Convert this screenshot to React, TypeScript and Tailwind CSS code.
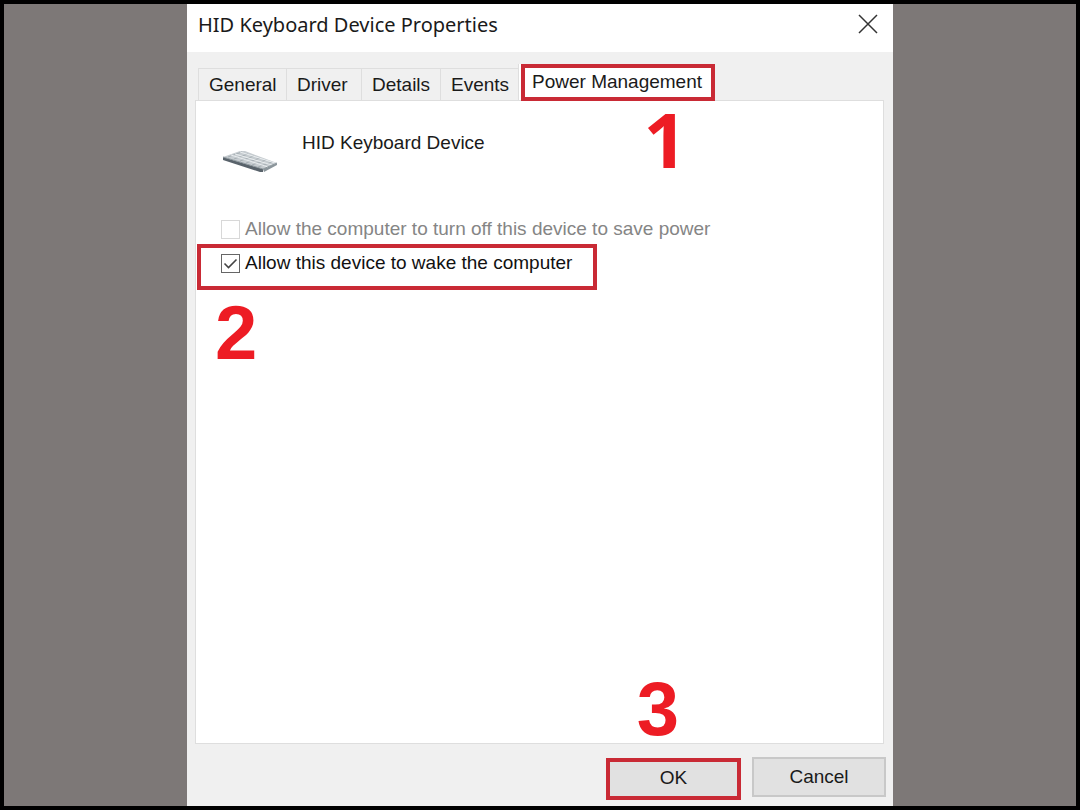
import { useState } from "react";
import clsx from "clsx";

const tabs = [
  { name: "General", width: "w-[88px]" },
  { name: "Driver", width: "w-[75px]" },
  { name: "Details", width: "w-[79px]" },
  { name: "Events", width: "w-[78px]" },
];

const KeyboardIcon = () => (
  <svg width="58" height="26" viewBox="0 0 58 26" aria-hidden="true">
    <path d="M1 8 L41 20 L41 23 L38 23 L1 11 Z" fill="#59636b" />
    <path d="M41 20 L55 14 L55 16 L42 23 Z" fill="#8b959b" />
    <path d="M1 8 L18 2 L23 2 L55 14 L41 20 Z" fill="#c6ccd0" />
    <path
      d="M6 8 L20 3 M12 10 L26 5 M18 12 L32 7 M24 14 L38 9 M30 16 L44 11 M36 18 L50 13"
      stroke="#a6afb4"
      strokeWidth="1"
    />
    <path
      d="M9 6 L46 18 M13 5 L50 16 M18 3 L53 14"
      stroke="#e9edef"
      strokeWidth="1"
    />
    <path d="M1 8 L41 20 L55 14" stroke="#8d979d" strokeWidth="1" fill="none" />
  </svg>
);

interface StepNumberProps {
  value: number;
  className: string;
}

const StepNumber = ({ value, className }: StepNumberProps) => (
  <span
    className={clsx(
      "pointer-events-none absolute text-[76px] leading-none font-bold text-[#ed1c24]",
      className,
    )}
  >
    {value}
  </span>
);

interface CheckOptionProps {
  id: string;
  label: string;
  checked: boolean;
  disabled?: boolean;
  onChange?: (checked: boolean) => void;
}

const CheckOption = ({ id, label, checked, disabled, onChange }: CheckOptionProps) => (
  <div className="flex h-6 items-center gap-[5px]">
    <span className="relative flex size-[19px] shrink-0">
      <input
        id={id}
        type="checkbox"
        checked={checked}
        disabled={disabled}
        onChange={(e) => onChange?.(e.target.checked)}
        className="size-full appearance-none border border-[#666] bg-white disabled:border-[#d8d8d8]"
      />
      {checked && (
        <svg
          viewBox="0 0 19 19"
          className="pointer-events-none absolute inset-0"
          fill="none"
          stroke="#444"
          strokeWidth="1.6"
        >
          <path d="M3.5 9.5 L7.5 13.5 L15.5 5.5" />
        </svg>
      )}
    </span>
    <label
      htmlFor={id}
      className={clsx("text-[19px] leading-6", disabled ? "text-[#858585]" : "text-[#111]")}
    >
      {label}
    </label>
  </div>
);

export default function App() {
  const [wake, setWake] = useState(true);

  return (
    <div className="flex min-h-screen justify-center border-4 border-black bg-[#7d7877] font-['Liberation_Sans',Arial,sans-serif] text-[#1a1a1a]">
      <div role="dialog" aria-labelledby="title" className="flex w-full max-w-[706px] flex-col bg-[#f0f0f0]">
        <header className="flex h-12 items-center justify-between bg-white pr-[15px] pl-[11px]">
          <h1 id="title" className="pb-[6px] font-['Noto_Sans','Open_Sans',sans-serif] text-[20px] leading-7">
            HID Keyboard Device Properties
          </h1>
          <button type="button" aria-label="Close" className="mb-2">
            <svg width="20" height="20" viewBox="0 0 20 20" stroke="#333" strokeWidth="1.5">
              <path d="M1 1 L19 19 M19 1 L1 19" />
            </svg>
          </button>
        </header>

        <div role="tablist" className="flex items-end pt-3 pl-[11px]">
          {tabs.map((tab) => (
            <button
              key={tab.name}
              type="button"
              role="tab"
              aria-selected={false}
              className={clsx(
                "h-8 border-t border-l border-[#dedede] pl-[10px] text-left text-[19px] leading-6",
                tab.width,
              )}
            >
              {tab.name}
            </button>
          ))}
          <div className="flex h-9 border-l border-[#dedede] bg-white pl-[2px]">
            <button
              type="button"
              role="tab"
              aria-selected={true}
              className="z-10 h-[37px] border-4 border-[#c92a35] bg-white pr-[9px] pb-[2px] pl-[7px] text-[19px] leading-6"
            >
              Power Management
            </button>
          </div>
        </div>

        <main role="tabpanel" className="relative mr-[9px] ml-2 flex-1 border border-[#dedede] bg-white">
          <div className="flex h-[116px] items-start gap-[22px] pt-[30px] pl-[26px]">
            <div className="pt-[18px]">
              <KeyboardIcon />
            </div>
            <h2 className="text-[19px] leading-6">HID Keyboard Device</h2>
          </div>
          <div className="pl-[25px]">
            <CheckOption
              id="turn-off"
              label="Allow the computer to turn off this device to save power"
              checked={false}
              disabled
            />
          </div>
          <div className="mt-[3px] ml-px w-fit border-4 border-[#c92a35] pt-[3px] pr-[21px] pb-[11px] pl-5">
            <CheckOption
              id="wake"
              label="Allow this device to wake the computer"
              checked={wake}
              onChange={setWake}
            />
          </div>
          <StepNumber value={1} className="top-0 right-[196px] font-['Open_Sans',sans-serif]" />
          <StepNumber value={2} className="top-[194px] left-[19px]" />
          <StepNumber value={3} className="right-[204px] -bottom-1" />
        </main>

        <footer className="flex h-[62px] items-start justify-end gap-[11px] pt-[13px] pr-[7px]">
          <button
            type="button"
            className="mt-px h-[42px] w-[135px] border-4 border-[#c92a35] bg-[#e1e1e1] pb-[2px] text-[19px] leading-6"
          >
            OK
          </button>
          <button
            type="button"
            className="h-10 w-[134px] border-2 border-[#c8c8c8] bg-[#e1e1e1] text-[19px] leading-6"
          >
            Cancel
          </button>
        </footer>
      </div>
    </div>
  );
}
